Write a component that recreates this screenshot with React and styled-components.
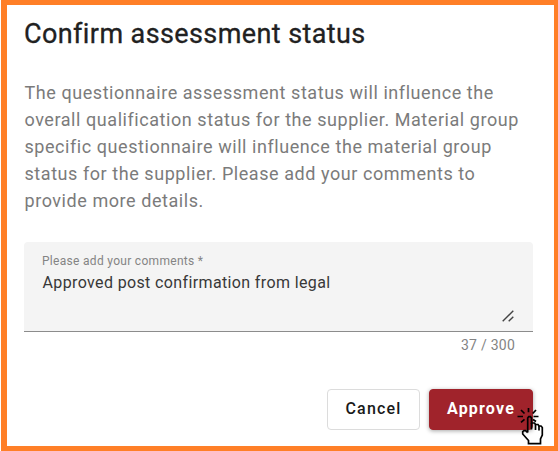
import styled, { createGlobalStyle } from "styled-components";

const GlobalStyle = createGlobalStyle`
  * {
    box-sizing: border-box;
  }
  body {
    margin: 0;
    background-color: #fff;
    font-family: Roboto, "Liberation Sans", sans-serif;
  }
`;

const bodyLines = [
  "The questionnaire assessment status will influence the",
  "overall qualification status for the supplier. Material group",
  "specific questionnaire will influence the material group",
  "status for the supplier. Please add your comments to",
  "provide more details.",
];

function ResizeGrip() {
  return (
    <S.Grip width="12" height="12" viewBox="0 0 12 12">
      <path d="M0.7 11.3L11.3 0.7M6.7 11.3L11.3 6.7" />
    </S.Grip>
  );
}

function ClickHand() {
  return (
    <S.Hand width="27" height="38" viewBox="0 0 27 38">
      <path d="M10.7 25.5V11L11.7 9.7H13.5L14.5 11V16H17.5L18.5 17.5H21L22 19H24L25.3 20.5V28L23.5 32V36.7H11.5V33.5L5.7 27V24.7L7 23.7H8.5L10.7 25.5" />
      <path d="M14.5 16V22.5M18.5 17.5V23M22 19V23.5M11.5 1V5.3M4 3L7.5 6.5M19 3L15.7 6.5M0.5 9.5H6M16.5 9.5H21.5M4 15.3L7.5 12.3M16 12.5L19 14.5" />
    </S.Hand>
  );
}

function App() {
  return (
    <>
      <GlobalStyle />
      <S.Dialog>
        <S.Title>Confirm assessment status</S.Title>
        <S.Description>
          {bodyLines.map((line) => (
            <S.Line key={line}>{line}</S.Line>
          ))}
        </S.Description>
        <S.Field>
          <S.Label>Please add your comments *</S.Label>
          <S.Value>Approved post confirmation from legal</S.Value>
          <ResizeGrip />
        </S.Field>
        <S.Counter>37 / 300</S.Counter>
        <S.Actions>
          <Button $width={93}>Cancel</Button>
          <Button $width={104} $primary>
            Approve
          </Button>
        </S.Actions>
        <ClickHand />
      </S.Dialog>
    </>
  );
}

export default App;

const Dialog = styled.div`
  position: relative;
  display: flex;
  flex-direction: column;
  width: 557px;
  height: 451px;
  margin-left: 1px;
  padding: 13px 21px 0 17px;
  border: solid #ff7f27;
  border-width: 5px 4px 5px 6px;
  background-color: #fff;
`;

const Title = styled.h1`
  margin: 0;
  font-size: 27px;
  line-height: 32px;
  font-weight: 400;
  letter-spacing: 0.4px;
  color: #212121;
  -webkit-text-stroke: 0.3px #212121;
`;

const Description = styled.p`
  margin: 29px 0 0;
  padding-left: 0.5px;
  font-size: 18px;
  line-height: 27px;
  letter-spacing: 0.56px;
  color: #7b7b7b;
`;

const Line = styled.span`
  display: block;
  white-space: nowrap;
`;

const Field = styled.div`
  display: flex;
  flex-direction: column;
  height: 90px;
  margin-top: 28px;
  padding: 11px 18px 0;
  border-bottom: 1px solid #8c8c8c;
  border-radius: 4px 4px 0 0;
  background-color: #f4f4f4;
`;

const Label = styled.label`
  font-size: 12px;
  line-height: 16px;
  letter-spacing: 0.3px;
  color: #848484;
`;

const Value = styled.div`
  margin-top: 2px;
  padding-left: 0.5px;
  font-size: 16px;
  line-height: 24px;
  letter-spacing: 0.37px;
  color: #383838;
`;

const Grip = styled.svg`
  align-self: flex-end;
  margin: 15px 1px 0 0;
  fill: none;
  stroke: #444;
  stroke-width: 1.4;
`;

const Counter = styled.div`
  margin-top: 5px;
  padding-right: 18px;
  font-size: 14px;
  line-height: 16px;
  letter-spacing: 0.25px;
  text-align: right;
  color: #848484;
`;

const Actions = styled.div`
  display: flex;
  justify-content: flex-end;
  gap: 9px;
  margin-top: 36px;
`;

const Button = styled.button`
  width: ${({ $width }) => $width}px;
  height: 41px;
  padding: 0 0 3px;
  border: 1px solid ${({ $primary }) => ($primary ? "#a0232b" : "#dcdcdc")};
  border-radius: 4px;
  background-color: ${({ $primary }) => ($primary ? "#a0232b" : "#fff")};
  box-shadow: ${({ $primary }) =>
    $primary ? "0 1px 4px rgba(0, 0, 0, 0.35)" : "none"};
  color: ${({ $primary }) => ($primary ? "#fff" : "#1a1a1a")};
  font-family: inherit;
  font-size: 16px;
  font-weight: ${({ $primary }) => ($primary ? 700 : 500)};
  letter-spacing: 1.2px;
`;

// pointer lies over the corner of the Approve button
const Hand = styled.svg`
  position: absolute;
  left: 510px;
  top: 402px;
  fill: none;
  stroke: #000;
  stroke-width: 1.7;
`;

const S = {
  Dialog,
  Title,
  Description,
  Line,
  Field,
  Label,
  Value,
  Grip,
  Counter,
  Actions,
  Hand,
};
